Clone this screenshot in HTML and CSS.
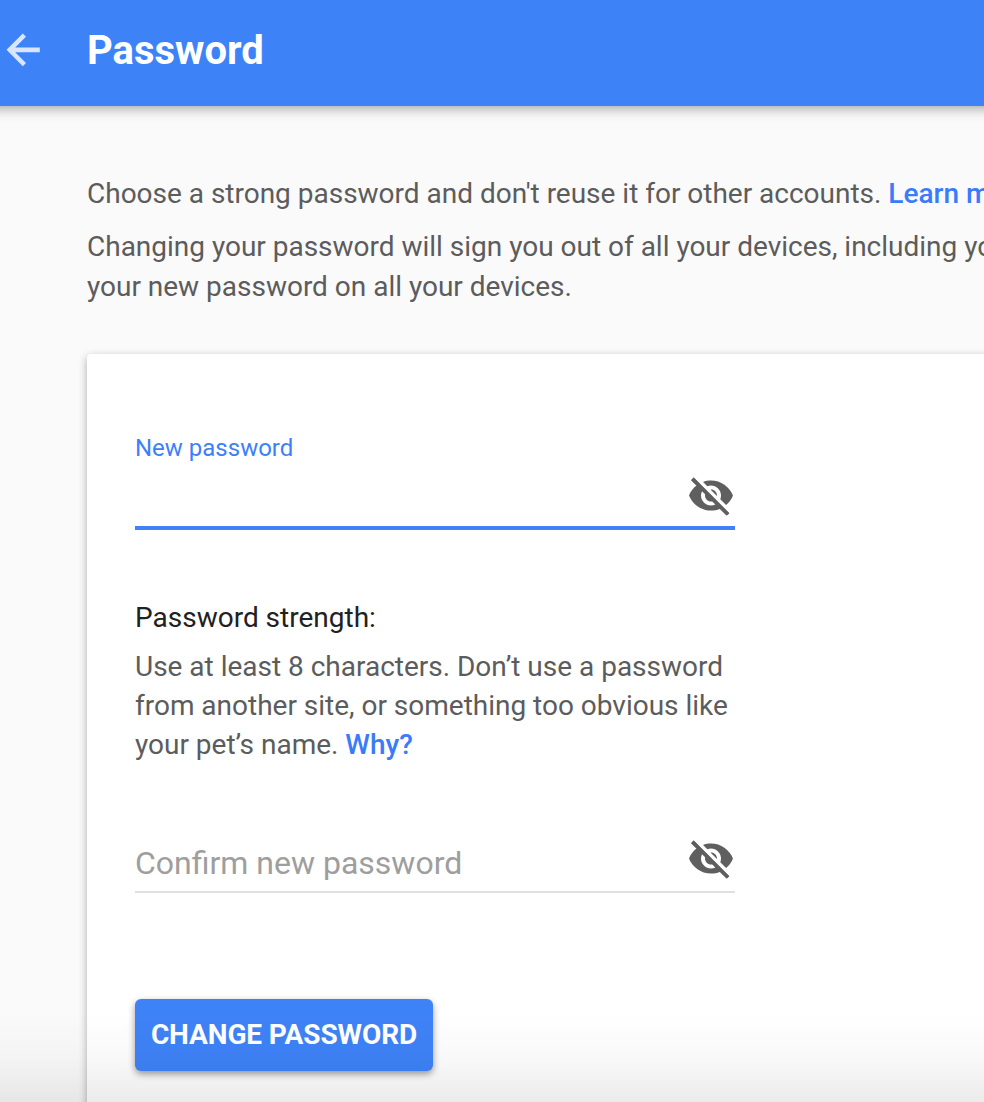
FILE: index.html
```html
<!DOCTYPE html>
<html lang="en">
<head>
<meta charset="utf-8">
<title>Password</title>
<link rel="stylesheet" href="styles.css">
</head>
<body>
<header class="topbar">
  <svg class="back" viewBox="0 0 34 34" aria-label="Back"><path d="M33.8 14.5H9.2L20 3.7 16.8.5.5 16.8l16.3 16.4L20 30 9.2 19.2h24.6z"/></svg>
  <h1 class="title">Password</h1>
</header>
<main class="page">
  <div class="intro">
    <p class="line">Choose a strong password and don't reuse it for other accounts. <a class="link">Learn m</a></p>
    <p class="line second">Changing your password will sign you out of all your devices, including yo<br>your new password on all your devices.</p>
  </div>
  <section class="card">
    <div class="field active">
      <label class="label">New password</label>
      <svg class="eye" viewBox="1 2.2 22 20"><path d="M12 7c2.76 0 5 2.24 5 5 0 .65-.13 1.26-.36 1.83l2.92 2.92c1.51-1.26 2.7-2.89 3.43-4.75-1.73-4.39-6-7.5-11-7.5-1.4 0-2.74.25-3.98.7l2.16 2.16C10.74 7.13 11.35 7 12 7zM2 4.27l2.28 2.28.46.46C3.08 8.3 1.78 10.02 1 12c1.73 4.39 6 7.5 11 7.5 1.55 0 3.03-.3 4.38-.84l.42.42L19.73 22 21 20.73 3.27 3 2 4.27zM7.53 9.8l1.55 1.55c-.05.21-.08.43-.08.65 0 1.66 1.34 3 3 3 .22 0 .44-.03.65-.08l1.55 1.55c-.67.33-1.41.53-2.2.53-2.76 0-5-2.24-5-5 0-.79.2-1.53.53-2.2zm4.31-.78l3.15 3.15.02-.16c0-1.66-1.34-3-3-3l-.17.01z"/><path d="M2.2 4.2 3.4 3 21.2 20.8 20 22z"/></svg>
    </div>
    <div class="strength">
      <h2 class="strength-title">Password strength:</h2>
      <p class="hint">Use at least 8 characters. Don’t use a password<br>from another site, or something too obvious like<br>your pet’s name. <a class="link">Why?</a></p>
    </div>
    <div class="field confirm">
      <span class="placeholder">Confirm new password</span>
      <svg class="eye" viewBox="1 2.2 22 20"><path d="M12 7c2.76 0 5 2.24 5 5 0 .65-.13 1.26-.36 1.83l2.92 2.92c1.51-1.26 2.7-2.89 3.43-4.75-1.73-4.39-6-7.5-11-7.5-1.4 0-2.74.25-3.98.7l2.16 2.16C10.74 7.13 11.35 7 12 7zM2 4.27l2.28 2.28.46.46C3.08 8.3 1.78 10.02 1 12c1.73 4.39 6 7.5 11 7.5 1.55 0 3.03-.3 4.38-.84l.42.42L19.73 22 21 20.73 3.27 3 2 4.27zM7.53 9.8l1.55 1.55c-.05.21-.08.43-.08.65 0 1.66 1.34 3 3 3 .22 0 .44-.03.65-.08l1.55 1.55c-.67.33-1.41.53-2.2.53-2.76 0-5-2.24-5-5 0-.79.2-1.53.53-2.2zm4.31-.78l3.15 3.15.02-.16c0-1.66-1.34-3-3-3l-.17.01z"/><path d="M2.2 4.2 3.4 3 21.2 20.8 20 22z"/></svg>
    </div>
    <button class="submit">CHANGE PASSWORD</button>
  </section>
</main>
</body>
</html>
```

FILE: styles.css
```css
* { box-sizing: border-box; margin: 0; padding: 0; }
html { overflow: hidden; }
body { position: relative; display: flex; flex-direction: column; width: 984px; height: 1102px; overflow: hidden; background: #fafafa; font-family: Roboto, sans-serif; color: #5c5c5c; }
/* Shade fading in over the bottom edge of the window */
body::after { content: ""; position: absolute; left: 0; right: 0; bottom: 0; height: 90px; background: linear-gradient(rgba(0,0,0,0), rgba(0,0,0,.025) 50%, rgba(0,0,0,.08)); pointer-events: none; }
.topbar { position: relative; flex: none; display: flex; align-items: center; height: 106px; margin: 0 -20px; padding: 0 20px 6px 26px; background: #3e82f7; box-shadow: 0 2px 12px rgba(0,0,0,.38); }
.back { width: 34px; height: 34px; margin-right: 47px; fill: #d8e6fd; }
.title { padding-top: 2px; color: #fff; font-size: 40px; line-height: 48px; font-weight: 700; }
.page { flex: 1; min-height: 0; padding: 68px 0 0 87px; overflow: hidden; }
.intro { height: 180px; white-space: nowrap; font-size: 28px; line-height: 40px; letter-spacing: -.01px; }
.second { margin-top: 13px; }
.link { color: #3b7bfb; font-weight: 500; }
.card { width: 940px; height: 800px; padding: 80px 0 0 48px; border-radius: 4px; background: #fff; box-shadow: 0 3px 9px rgba(0,0,0,.32); }
.field { display: flex; width: 600px; justify-content: space-between; }
.active { height: 96px; border-bottom: 4px solid #3e82f7; }
.label { color: #3e7ff9; font-size: 24px; line-height: 29px; }
.eye { flex: none; width: 44px; height: 40px; fill: #5f5f5f; }
.active .eye { margin: 42px 2px 0 0; }
.strength { padding-top: 70px; height: 307px; white-space: nowrap; }
.strength-title { color: #212121; font-size: 28px; line-height: 36px; font-weight: 400; }
.hint { margin-top: 11px; font-size: 28px; line-height: 39px; letter-spacing: -.01px; }
.confirm { height: 56px; border-bottom: 2px solid #e0e0e0; }
.confirm .eye { margin: 2px 2px 0 0; }
.placeholder { color: #9e9e9e; font-size: 32px; line-height: 53px; }
.submit { display: block; width: 298px; height: 72px; margin-top: 106px; padding-bottom: 2px; border: 0; border-radius: 6px; background: #3e82f7; color: #fff; font: 700 28px Roboto, sans-serif; letter-spacing: -.1px; white-space: nowrap; box-shadow: 0 3px 7px rgba(0,0,0,.4); }
```
